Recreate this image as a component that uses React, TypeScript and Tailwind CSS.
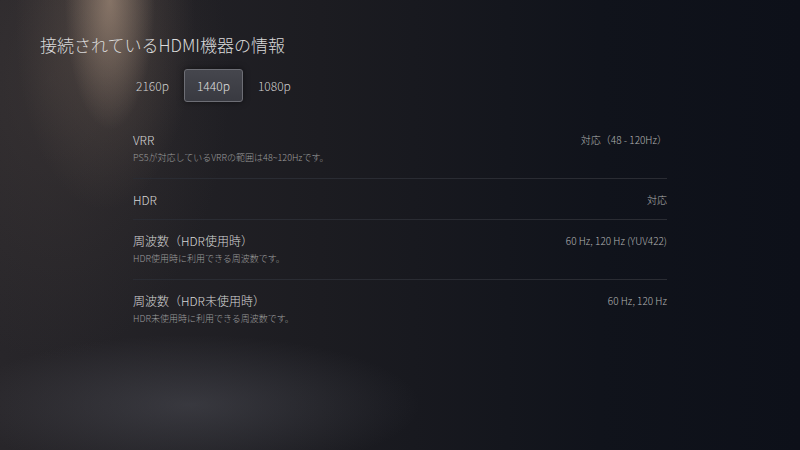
import React from "react";

const tabs = ["2160p", "1440p", "1080p"];

const rows = [
  { title: "VRR", desc: "PS5が対応しているVRRの範囲は48~120Hzです。", value: "対応（48 - 120Hz）" },
  { title: "HDR", value: "対応" },
  { title: "周波数（HDR使用時）", desc: "HDR使用時に利用できる周波数です。", value: "60 Hz, 120 Hz (YUV422)" },
  { title: "周波数（HDR未使用時）", desc: "HDR未使用時に利用できる周波数です。", value: "60 Hz, 120 Hz" },
];

export default function App() {
  return (
    <div className="w-[800px] h-[450px] overflow-hidden font-light font-['Noto_Sans_CJK_JP','Noto_Sans',sans-serif] bg-[#16181e] bg-[radial-gradient(ellipse_45px_130px_at_110px_0px,rgba(175,150,130,0.6),transparent),radial-gradient(ellipse_90px_190px_at_105px_20px,rgba(120,102,90,0.4),transparent),radial-gradient(ellipse_180px_280px_at_50px_80px,rgba(80,70,66,0.35),transparent),radial-gradient(ellipse_230px_70px_at_190px_405px,rgba(100,102,112,0.35),transparent),linear-gradient(90deg,#28262a_0%,#1c1c21_40%,#10131b_75%,#0d1019_100%)]">
      <div className="pt-[34px] pl-[40px]">
        <h1 className="text-[17px] leading-[22px] text-[#dadada]">接続されているHDMI機器の情報</h1>
      </div>

      {/* resolution tabs */}
      <div className="flex items-center gap-[3px] mt-[13px] ml-[124px]">
        {tabs.map((t) =>
          t === "1440p" ? (
            <div
              key={t}
              className="h-[33px] px-[12px] flex items-center rounded-[3px] border border-[#6d6e75] bg-[linear-gradient(180deg,#45464d,#393a41)] shadow-[0_0_6px_rgba(0,0,0,0.5)] text-[12px] text-[#e0e0e0]"
            >
              {t}
            </div>
          ) : (
            <div key={t} className="h-[33px] px-[12px] flex items-center text-[12px] text-[#cfcfcf]">
              {t}
            </div>
          )
        )}
      </div>

      {/* info rows */}
      <div className="mt-[17px] ml-[133px] w-[534px]">
        {rows.map((r, i) => (
          <div
            key={r.title}
            className={
              (r.desc ? "pt-[12px] pb-[12px]" : "pt-[12px] pb-[10px]") +
              (i < rows.length - 1 ? " border-b border-[#2a2c33]" : "")
            }
          >
            <div className="flex justify-between items-center">
              <span className="text-[12px] leading-[18px] text-[#d6d6d6]">{r.title}</span>
              <span className="text-[10px] leading-[18px] text-[#b3b3b3]">{r.value}</span>
            </div>
            {r.desc && <div className="mt-px text-[9px] leading-[16px] text-[#9d9d9d]">{r.desc}</div>}
          </div>
        ))}
      </div>
    </div>
  );
}
